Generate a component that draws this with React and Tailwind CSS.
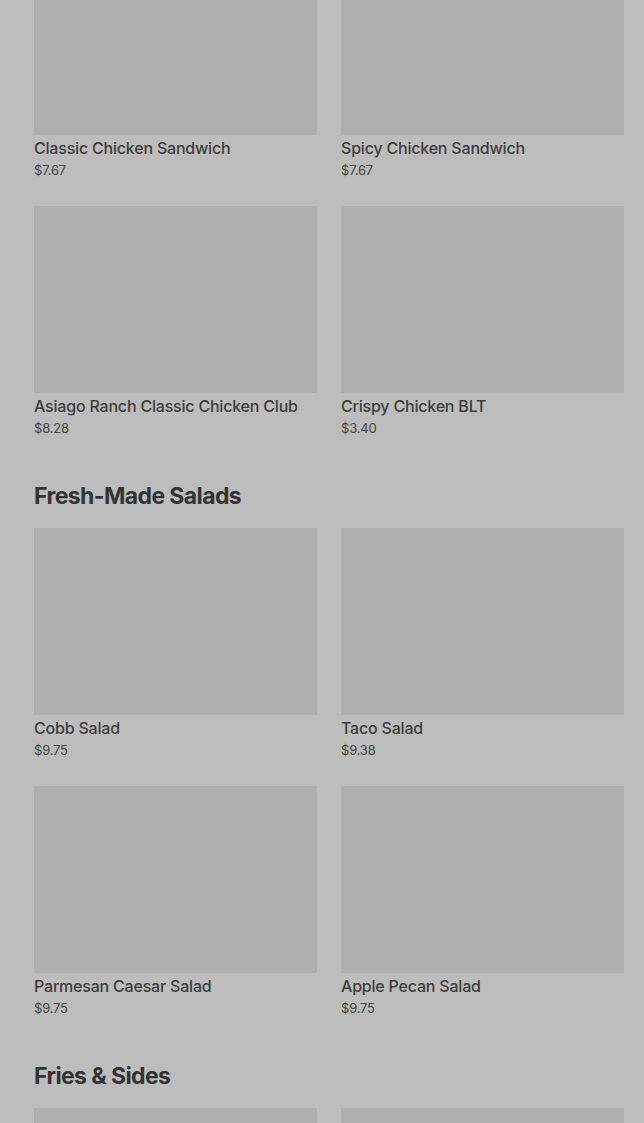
const sections = [
  {
    title: null,
    items: [
      { name: "Classic Chicken Sandwich", price: "$7.67" },
      { name: "Spicy Chicken Sandwich", price: "$7.67" },
      { name: "Asiago Ranch Classic Chicken Club", price: "$8.28" },
      { name: "Crispy Chicken BLT", price: "$3.40" },
    ],
  },
  {
    title: "Fresh-Made Salads",
    items: [
      { name: "Cobb Salad", price: "$9.75" },
      { name: "Taco Salad", price: "$9.38" },
      { name: "Parmesan Caesar Salad", price: "$9.75" },
      { name: "Apple Pecan Salad", price: "$9.75" },
    ],
  },
  {
    title: "Fries & Sides",
    items: [
      { name: "Natural-Cut Fries", price: "$2.59" },
      { name: "Chili", price: "$2.79" },
    ],
  },
];

function MenuCard({ item }) {
  return (
    <div className="flex flex-col">
      <div className="h-[187px] bg-[#afafaf]" />
      <div className="mt-[3px] text-[16px] leading-[20px] font-medium tracking-[-0.2px] text-[#3d3d3d]">{item.name}</div>
      <div className="mt-[3px] text-[13px] leading-[18px] tracking-[-0.2px] text-[#444444]">{item.price}</div>
    </div>
  );
}

export default function App() {
  return (
    <div className="h-[1123px] bg-[#bdbdbd] overflow-hidden" style={{ fontFamily: "Inter, 'Liberation Sans', sans-serif" }}>
      <div className="pl-[34px] pr-[20px] -mt-[52px]">
        {sections.map((section, i) => (
          <div key={i} className={i > 0 ? "mt-[45px]" : ""}>
            {section.title && (
              <h2 className="text-[23px] leading-[28px] font-bold tracking-[-0.6px] text-[#333333] mb-[18px]">
                {section.title}
              </h2>
            )}
            <div className="grid grid-cols-2 gap-x-[24px] gap-y-[27px]">
              {section.items.map((item) => (
                <MenuCard key={item.name} item={item} />
              ))}
            </div>
          </div>
        ))}
      </div>
    </div>
  );
}
